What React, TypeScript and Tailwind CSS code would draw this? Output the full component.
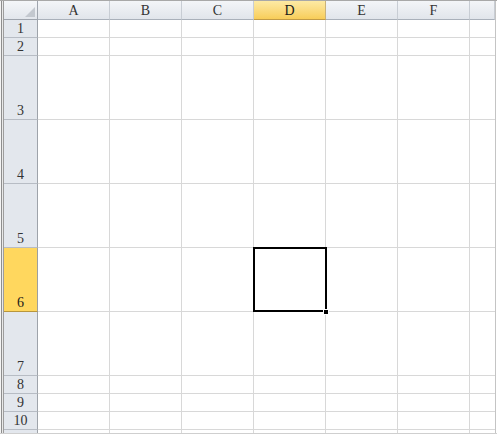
import React from "react";

const cols = ["A", "B", "C", "D", "E", "F", ""];
// row heights in px (including the bottom grid line)
const rows = [18, 18, 64, 64, 64, 64, 64, 18, 18, 18];
const activeCol = 3;
const activeRow = 5;

function Corner() {
  return (
    <div className="relative border-b border-r border-[#9ea4ad] bg-gradient-to-b from-[#f4f6f9] to-[#e2e6ec]">
      <svg className="absolute bottom-[2px] right-[2px]" width="10" height="10" viewBox="0 0 10 10">
        <polygon points="10,0 10,10 0,10" fill="#c3c8cf" />
      </svg>
    </div>
  );
}

function ColHeader({ label, active }: { label: string; active: boolean }) {
  return (
    <div
      className={
        active
          ? "flex items-center justify-center border-b border-r border-b-[#c29b46] border-r-[#c9b27a] bg-gradient-to-b from-[#fdeaa3] to-[#f8cd58] text-[#1a1a1a]"
          : "flex items-center justify-center border-b border-r border-b-[#a9b0ba] border-r-[#c8cdd4] bg-gradient-to-b from-[#f3f5f8] to-[#e1e5eb] text-[#333]"
      }
    >
      {label}
    </div>
  );
}

function RowHeader({ n, active }: { n: number; active: boolean }) {
  return (
    <div
      className={
        active
          ? "flex items-end justify-center border-b border-r border-b-[#b8963c] border-r-[#9d9f9f] bg-[#ffd75e] leading-[17px] text-[#1a1a1a]"
          : "flex items-end justify-center border-b border-r border-b-[#b7bcc4] border-r-[#9ea3aa] bg-[#e3e7ed] leading-[17px] text-[#333]"
      }
    >
      {n}
    </div>
  );
}

function Cell({ selected, last }: { selected: boolean; last: boolean }) {
  return (
    <div className={last ? "relative border-b border-[#d8d8d8]" : "relative border-b border-r border-[#d8d8d8]"}>
      {selected && (
        <>
          <div className="absolute left-[-1px] top-[-1px] z-10 h-[65px] w-[74px] border-2 border-black" />
          <div className="absolute bottom-[-4px] right-[-4px] z-20 h-[6px] w-[6px] border border-white bg-black" />
        </>
      )}
    </div>
  );
}

export default function App() {
  return (
    <div className="h-[439px] w-[497px] overflow-hidden bg-white font-[family-name:'Liberation_Serif',serif] text-[14px] font-normal">
      <div className="flex border-b border-t border-b-[#cfcfcf] border-t-[#a8a8a8]">
        <div className="w-[4px] bg-[linear-gradient(to_right,#f4f4f4_1px,#8e8e8e_1px,#8e8e8e_2px,#e9e9e9_2px,#e9e9e9_3px,#9d9d9d_3px)]" />
        <div className="grid grid-cols-[34px_repeat(6,72px)_25px] grid-rows-[19px_18px_18px_64px_64px_64px_64px_64px_18px_18px_18px_3px]">
          <Corner />
          {cols.map((c, i) => (
            <ColHeader key={i} label={c} active={i === activeCol} />
          ))}
          {rows.map((_, r) => (
            <React.Fragment key={r}>
              <RowHeader n={r + 1} active={r === activeRow} />
              {cols.map((_, c) => (
                <Cell key={c} selected={r === activeRow && c === activeCol} last={c === cols.length - 1} />
              ))}
            </React.Fragment>
          ))}
          <div className="border-r border-r-[#9ea3aa] bg-[#e3e7ed]" />
          {cols.map((_, c) => (
            <div key={c} className={c === cols.length - 1 ? "" : "border-r border-[#d8d8d8]"} />
          ))}
        </div>
        <div className="w-[2px] border-l border-[#c4c4c4]" />
      </div>
    </div>
  );
}
